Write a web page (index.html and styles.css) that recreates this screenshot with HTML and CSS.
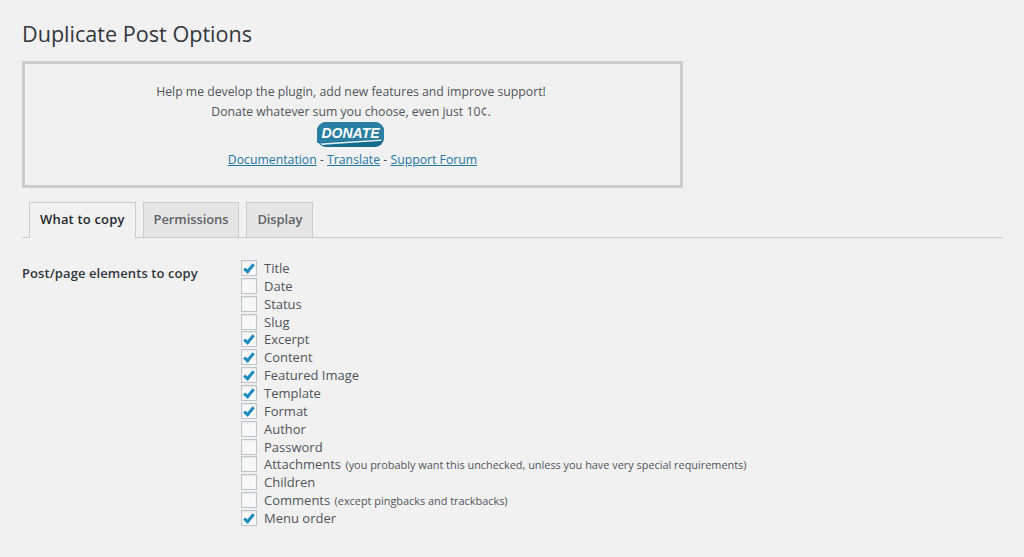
FILE: index.html

```html
<!DOCTYPE html>
<html lang="en">

<head>
    <meta charset="UTF-8">
    <meta name="viewport" content="width=device-width, initial-scale=1.0">
    <title>Duplicate Post Options</title>
    <link rel="stylesheet" href="styles.css">
</head>

<body>
    <div class="wrap">
        <h1 class="page-title">Duplicate Post Options</h1>

        <div class="donate-box">
            <p>Help me develop the plugin, add new features and improve support!</p>
            <p>Donate whatever sum you choose, even just 10¢.</p>
            <a class="donate-btn" href="#">
                <svg class="donate-art" width="67" height="25" viewBox="0 0 67 25">
                    <rect width="67" height="25" rx="9" fill="#146c8f"/>
                    <path d="M0 9 V9 A9 9 0 0 1 9 0 H58 A9 9 0 0 1 67 9 V17 Q35 18 0 21 Z" fill="#2b7fa3"/>
                    <path d="M3 21.5 Q30 19.5 65 17.5 L64 19 Q30 21 5 23 Z" fill="#e6f0f4"/>
                </svg>
                <span>DONATE</span>
            </a>
            <p class="donate-links"><a href="#">Documentation</a> - <a href="#">Translate</a> - <a href="#">Support Forum</a></p>
        </div>

        <div class="tabs">
            <a class="tab tab-active" href="#">What to copy</a>
            <a class="tab" href="#">Permissions</a>
            <a class="tab" href="#">Display</a>
        </div>

        <div class="form-row">
            <div class="form-label">Post/page elements to copy</div>
            <div class="options">
                <label class="option"><input type="checkbox" checked>Title</label>
                <label class="option"><input type="checkbox">Date</label>
                <label class="option"><input type="checkbox">Status</label>
                <label class="option"><input type="checkbox">Slug</label>
                <label class="option"><input type="checkbox" checked>Excerpt</label>
                <label class="option"><input type="checkbox" checked>Content</label>
                <label class="option"><input type="checkbox" checked>Featured Image</label>
                <label class="option"><input type="checkbox" checked>Template</label>
                <label class="option"><input type="checkbox" checked>Format</label>
                <label class="option"><input type="checkbox">Author</label>
                <label class="option"><input type="checkbox">Password</label>
                <label class="option"><input type="checkbox">Attachments <small>(you probably want this unchecked, unless you have very special requirements)</small></label>
                <label class="option"><input type="checkbox">Children</label>
                <label class="option"><input type="checkbox">Comments <small>(except pingbacks and trackbacks)</small></label>
                <label class="option"><input type="checkbox" checked>Menu order</label>
            </div>
        </div>
    </div>
</body>

</html>
```

FILE: styles.css

```css
body {
    margin: 0;
    background-color: #f1f1f1;
    color: #50555a;
    font-family: "Open Sans", "Noto Sans", sans-serif;
    font-size: 13px;
    overflow: hidden;
}

.wrap {
    width: 981px;
    margin-left: 22px;
}

.page-title {
    margin: 0;
    padding-top: 19px;
    height: 61px;
    box-sizing: border-box;
    font-size: 21.6px;
    line-height: 30px;
    font-weight: 400;
    color: #32373c;
}

.donate-box {
    width: 661px;
    height: 127px;
    box-sizing: border-box;
    border: 3px solid #ccc;
    padding: 18px 3px 0 0;
    text-align: center;
    font-size: 12.25px;
    line-height: 20px;
}

.donate-box p {
    margin: 0;
}

.donate-box a {
    color: #2277a5;
}

.donate-box .donate-links {
    padding-left: 3px;
}

.donate-box .donate-btn {
    display: block;
    position: relative;
    width: 67px;
    height: 25px;
    margin: 0 0 3px 292px;
    color: #fff;
    font-family: "Liberation Sans", sans-serif;
    font-size: 14px;
    font-weight: 700;
    font-style: italic;
    line-height: 23px;
    text-decoration: none;
}

.donate-art {
    position: absolute;
    left: 0;
    top: 0;
}

.donate-btn span {
    position: relative;
}

.tabs {
    display: flex;
    gap: 7px;
    margin-top: 14px;
    padding-left: 7px;
    height: 35px;
    border-bottom: 1px solid #ccc;
}

.tab {
    display: block;
    box-sizing: border-box;
    height: 35px;
    padding: 0 10px;
    border: 1px solid #ccc;
    border-bottom: none;
    background-color: #e5e5e5;
    color: #5f6468;
    font-weight: 600;
    line-height: 32px;
    letter-spacing: -0.1px;
    text-decoration: none;
}

.tab-active {
    height: 36px;
    background-color: #f1f1f1;
    color: #23282d;
    letter-spacing: 0.17px;
}

.form-row {
    display: flex;
    padding-top: 21px;
}

.form-label {
    width: 219px;
    padding-top: 4px;
    color: #32373c;
    font-weight: 600;
    line-height: 20px;
    letter-spacing: 0.08px;
}

.options {
    display: flex;
    flex-direction: column;
}

.option {
    display: flex;
    align-items: center;
    height: 17.86px;
    white-space: pre;
}

.option small {
    margin-left: 1px;
    font-size: 10.9px;
}

.option input {
    appearance: none;
    width: 16px;
    height: 16px;
    margin: 0 7px 0 0;
    border: 1px solid #c0c4c8;
    background-color: #f8f8f8;
    box-shadow: inset 0 1px 2px rgba(0, 0, 0, 0.07);
    flex: none;
    position: relative;
}

.option input:checked::before {
    content: "";
    position: absolute;
    left: 4px;
    top: 1px;
    width: 3px;
    height: 8px;
    border-right: 3px solid #1e8cbe;
    border-bottom: 3px solid #1e8cbe;
    transform: rotate(40deg);
}
```
